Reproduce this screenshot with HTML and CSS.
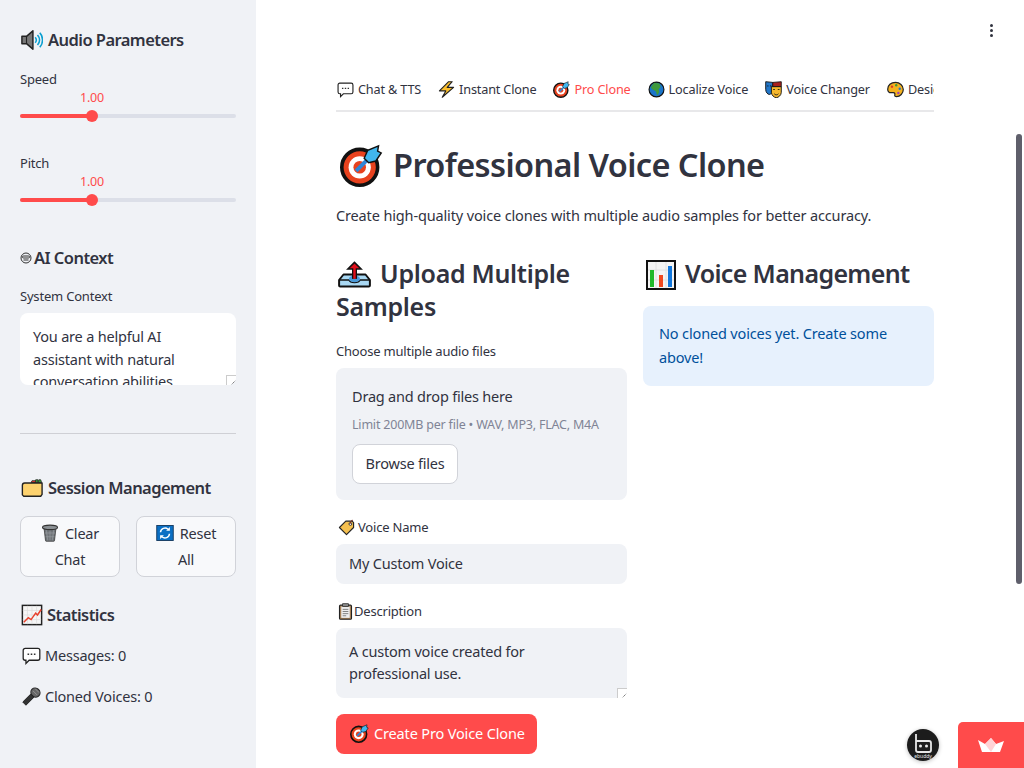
FILE: index.html
```html
<!DOCTYPE html>
<html lang="en">
<head>
    <meta charset="UTF-8">
    <meta name="viewport" content="width=device-width, initial-scale=1.0">
    <title>Professional Voice Clone</title>
    <link rel="stylesheet" href="styles.css">
</head>
<body>
    <svg class="defs" width="0" height="0">
        <symbol id="i-speaker" viewBox="0 0 24 24">
            <path d="M1 8h5l7-6v20l-7-6H1z" fill="#777" stroke="#222" stroke-width="1.600" stroke-linejoin="round"/>
            <path d="M6 8v8" stroke="#222" stroke-width="1.200"/>
            <path d="M15.500 9c1.500 1.800 1.500 4.200 0 6M18 6.500c3 3.200 3 7.800 0 11M20.500 4c4 4.500 4 11.500 0 16" fill="none" stroke="#0a9fd0" stroke-width="1.700"/>
        </symbol>
        <symbol id="i-robot" viewBox="0 0 24 24">
            <circle cx="12" cy="12" r="10" fill="none" stroke="#333" stroke-width="2"/>
            <rect x="5" y="8" width="14" height="4" rx="2" fill="none" stroke="#333" stroke-width="2"/>
            <path d="M7 16h10" stroke="#333" stroke-width="2"/>
        </symbol>
        <symbol id="i-folder" viewBox="0 0 24 24">
            <path d="M15 6l1-3h2.500v3zM18.500 6l1-3h2l1 3z" fill="#3a9a3a" stroke="#222" stroke-width=".8"/>
            <path d="M11 6l1-2h4v2z" fill="#d9372b" stroke="#222" stroke-width=".8"/>
            <path d="M1.500 9c0-1.500 1-2.500 2.500-2.500h19V19l-1.500 2H3l-1.500-1.500z" fill="#fdd26e" stroke="#222" stroke-width="1.500" stroke-linejoin="round"/>
        </symbol>
        <symbol id="i-trash" viewBox="0 0 24 24">
            <path d="M4 5h16l-2 17a1 1 0 0 1-1 1H7a1 1 0 0 1-1-1z" fill="#6f7478" stroke="#333" stroke-width="1"/>
            <path d="M7 8l2 14M12 8v14M17 8l-2 14M5 12h14M6 17h12" stroke="#9aa0a4" stroke-width=".8"/>
            <ellipse cx="12" cy="4.500" rx="10" ry="3" fill="#8b9094" stroke="#333" stroke-width="1.400"/>
        </symbol>
        <symbol id="i-refresh" viewBox="0 0 24 24">
            <rect x="1" y="2" width="22" height="20" fill="#0a6fc4" stroke="#12375c" stroke-width="1.200"/>
            <path d="M6 11a6 6 0 0 1 10-4M18 13a6 6 0 0 1-10 4" fill="none" stroke="#fff" stroke-width="2"/>
            <path d="M18.500 4v5h-5zM5.500 20v-5h5z" fill="#fff"/>
        </symbol>
        <symbol id="i-trend" viewBox="0 0 24 24">
            <rect x="1.500" y="1.500" width="21" height="21" fill="#f6f6f6" stroke="#222" stroke-width="1.600"/>
            <path d="M7 2v20M12 2v20M17 2v20M2 7h20M2 12h20M2 17h20" stroke="#ddd" stroke-width=".8"/>
            <path d="M3 20l5-5 3 2 5-7 2 2 4-6" fill="none" stroke="#e8412c" stroke-width="1.600"/>
        </symbol>
        <symbol id="i-chat" viewBox="0 0 24 24">
            <path d="M4 3h16a2.500 2.500 0 0 1 2.500 2.500v10A2.500 2.500 0 0 1 20 18H9l-4 4v-4H4a2.500 2.500 0 0 1-2.500-2.500v-10A2.500 2.500 0 0 1 4 3z" fill="#fff" stroke="#222" stroke-width="1.600"/>
            <path d="M7 10.500h2M11 10.500h2M15 10.500h2" stroke="#333" stroke-width="1.800"/>
        </symbol>
        <symbol id="i-mic" viewBox="0 0 24 24">
            <path d="M12 8l4 4L5 23l-4-4z" fill="#333" stroke="#222" stroke-width="1.200" stroke-linejoin="round"/>
            <ellipse cx="17" cy="7" rx="6" ry="5.500" transform="rotate(45 17 7)" fill="#666" stroke="#222" stroke-width="1.400"/>
            <path d="M14 5l5 5M17 2.500l4.500 4.500" stroke="#aaa" stroke-width=".8"/>
        </symbol>
        <symbol id="i-bolt" viewBox="0 0 24 24">
            <path d="M15 1L2 14h9L6 23l16-14h-9l7-8z" fill="#fbbf2d" stroke="#222" stroke-width="1.600" stroke-linejoin="round"/>
        </symbol>
        <symbol id="i-target" viewBox="0 0 24 24">
            <circle cx="11" cy="13" r="10" fill="#e8421e" stroke="#111" stroke-width="2"/>
            <circle cx="11" cy="13" r="6.200" fill="#fff"/>
            <circle cx="11" cy="13" r="3.500" fill="#e8421e"/>
            <path d="M9 15l8-8" stroke="#2f86d8" stroke-width="2.200"/>
            <path d="M13.500 8l2-4.500 6-2.500-.5 3 2 1-3 4.500-4 1z" fill="#41b6ee" stroke="#111" stroke-width=".8"/>
        </symbol>
        <symbol id="i-globe" viewBox="0 0 24 24">
            <circle cx="12" cy="12" r="10.500" fill="#1a75c9" stroke="#111" stroke-width="1.600"/>
            <path d="M9 2.500l7 1 2 5-3 3 1 4-3 5-2-6-4-2-3-3 2-4z" fill="#3f9a3d"/>
        </symbol>
        <symbol id="i-masks" viewBox="0 0 24 24">
            <path d="M1 1l10 1v10c0 4-3 7-5 7s-5-3-5-7z" fill="#2277c9" stroke="#111" stroke-width="1.300"/>
            <path d="M11 2l12-1v7H11z" fill="#a9201d" stroke="#111" stroke-width="1.200"/>
            <path d="M9 8h14v8c0 4-4 7.500-7 7.500S9 20 9 16z" fill="#f6b82d" stroke="#111" stroke-width="1.300"/>
            <path d="M11.500 12h2.500M18 12h2.500M13 18c1.500 2 4.500 2 6 0" fill="none" stroke="#111" stroke-width="1.200"/>
            <path d="M3 7h2M7 7h2" stroke="#111" stroke-width="1.200"/>
        </symbol>
        <symbol id="i-palette" viewBox="0 0 24 24">
            <path d="M12 2C5.500 2 1 6 1 11.500c0 3 2 5 5 5h3c2 0 2.500 1.500 2 3-.5 2 1 2.500 2.500 2.500 5 0 9.500-4.500 9.500-10S18 2 12 2z" fill="#f4b21f" stroke="#222" stroke-width="1.700"/>
            <circle cx="7" cy="8" r="1.700" fill="#d83b2e"/>
            <circle cx="13" cy="6" r="1.700" fill="#3a9a3a"/>
            <circle cx="18" cy="11" r="1.700" fill="#2277c9"/>
            <circle cx="16" cy="17" r="1.700" fill="#a33fb0"/>
        </symbol>
        <symbol id="i-upload" viewBox="0 0 30 24">
            <path d="M5 12h20l4 5v5a1 1 0 0 1-1 1H2a1 1 0 0 1-1-1v-5z" fill="#a9d8f3" stroke="#111" stroke-width="1.800" stroke-linejoin="round"/>
            <path d="M1.500 17H10c1 3 9 3 10 0h8.500" fill="none" stroke="#111" stroke-width="1.200"/>
            <ellipse cx="15" cy="16" rx="5" ry="3" fill="#4a9ad8"/>
            <path d="M15 16V6" stroke="#111" stroke-width="4.500"/>
            <path d="M15 1l-6 6h12z" fill="#e10f1a" stroke="#111" stroke-width="1.400"/>
            <path d="M15 16V6" stroke="#e10f1a" stroke-width="2.200"/>
        </symbol>
        <symbol id="i-bars" viewBox="0 0 30 30">
            <rect x="1" y="1" width="28" height="28" fill="#f4f4f4" stroke="#111" stroke-width="2"/>
            <path d="M10 2v26M20 2v26M2 10h26M2 20h26" stroke="#ddd" stroke-width=".8"/>
            <rect x="4" y="10" width="4" height="17" fill="#20b82a"/>
            <rect x="13" y="15" width="4" height="12" fill="#f0491f"/>
            <rect x="22" y="6" width="4" height="21" fill="#1277dc"/>
        </symbol>
        <symbol id="i-tag" viewBox="0 0 24 24">
            <path d="M11 3h9l2 2v7L12 22 2 12z" fill="#f5c04f" stroke="#222" stroke-width="1.600" stroke-linejoin="round"/>
            <circle cx="17.500" cy="7" r="2" fill="#fff" stroke="#222" stroke-width="1.200"/>
            <path d="M17 7c1-4 2-6 4-5" fill="none" stroke="#7a2c1d" stroke-width="1.400"/>
        </symbol>
        <symbol id="i-clipboard" viewBox="0 0 24 24">
            <rect x="3.500" y="3" width="17" height="20" rx="1.500" fill="#a57f55" stroke="#222" stroke-width="1.500"/>
            <rect x="6" y="5" width="12" height="16" fill="#eee"/>
            <rect x="8" y="1" width="8" height="4" fill="#888" stroke="#222"/>
            <path d="M8 9h8M8 12h8M8 15h8M8 18h5" stroke="#666" stroke-width="1.100"/>
        </symbol>
    </svg>

    <div class="app">
        <aside class="sidebar">
            <h3 class="side-head first"><svg class="ico ico-head"><use href="#i-speaker"/></svg>Audio Parameters</h3>

            <div class="slider">
                <div class="field-label">Speed</div>
                <div class="slider-value">1.00</div>
                <div class="track"><div class="track-fill"></div><div class="thumb"></div></div>
            </div>
            <div class="slider">
                <div class="field-label">Pitch</div>
                <div class="slider-value">1.00</div>
                <div class="track"><div class="track-fill"></div><div class="thumb"></div></div>
            </div>

            <h3 class="side-head context"><svg class="ico ico-small"><use href="#i-robot"/></svg>AI Context</h3>
            <div class="field-label">System Context</div>
            <div class="textarea textarea-white">
                You are a helpful AI assistant with natural conversation abilities
                <span class="grip"></span>
            </div>

            <hr class="divider">

            <h3 class="side-head session"><svg class="ico ico-head"><use href="#i-folder"/></svg>Session Management</h3>
            <div class="side-buttons">
                <button class="btn side-btn"><svg class="ico ico-btn"><use href="#i-trash"/></svg>Clear Chat</button>
                <button class="btn side-btn"><svg class="ico ico-btn"><use href="#i-refresh"/></svg>Reset All</button>
            </div>

            <h3 class="side-head stats"><svg class="ico ico-head"><use href="#i-trend"/></svg>Statistics</h3>
            <p class="stat"><svg class="ico ico-stat"><use href="#i-chat"/></svg>Messages: 0</p>
            <p class="stat"><svg class="ico ico-stat"><use href="#i-mic"/></svg>Cloned Voices: 0</p>
        </aside>

        <main class="main">
            <nav class="tabs">
                <div class="tab"><svg class="ico ico-tab"><use href="#i-chat"/></svg>Chat &amp; TTS</div>
                <div class="tab"><svg class="ico ico-tab"><use href="#i-bolt"/></svg>Instant Clone</div>
                <div class="tab active"><svg class="ico ico-tab"><use href="#i-target"/></svg>Pro Clone</div>
                <div class="tab"><svg class="ico ico-tab"><use href="#i-globe"/></svg>Localize Voice</div>
                <div class="tab"><svg class="ico ico-tab"><use href="#i-masks"/></svg>Voice Changer</div>
                <div class="tab"><svg class="ico ico-tab"><use href="#i-palette"/></svg>Design</div>
            </nav>

            <h1 class="title"><svg class="ico ico-title"><use href="#i-target"/></svg>Professional Voice Clone</h1>
            <p class="lead">Create high-quality voice clones with multiple audio samples for better accuracy.</p>

            <div class="columns">
                <section class="col-left">
                    <h2 class="sub"><svg class="ico ico-upload"><use href="#i-upload"/></svg>Upload Multiple Samples</h2>
                    <div class="field-label">Choose multiple audio files</div>
                    <div class="uploader">
                        <div class="drop-text">Drag and drop files here</div>
                        <div class="drop-hint">Limit 200MB per file • WAV, MP3, FLAC, M4A</div>
                        <button class="btn browse">Browse files</button>
                    </div>

                    <div class="field-label name-label"><svg class="ico ico-label"><use href="#i-tag"/></svg>Voice Name</div>
                    <div class="input">My Custom Voice</div>

                    <div class="field-label desc-label"><svg class="ico ico-label"><use href="#i-clipboard"/></svg>Description</div>
                    <div class="textarea textarea-grey">
                        A custom voice created for professional use.
                        <span class="grip"></span>
                    </div>

                    <button class="btn primary"><svg class="ico ico-primary"><use href="#i-target"/></svg>Create Pro Voice Clone</button>
                </section>

                <section class="col-right">
                    <h2 class="sub"><svg class="ico ico-bars"><use href="#i-bars"/></svg>Voice Management</h2>
                    <div class="info">No cloned voices yet. Create some above!</div>
                </section>
            </div>
        </main>
    </div>

    <div class="menu-dots"><span></span><span></span><span></span></div>
    <div class="scrollbar"></div>

    <div class="ebuddy">
        <svg viewBox="0 0 32 32" width="32" height="32">
            <circle cx="16" cy="16" r="16" fill="#1c1c1c"/>
            <path d="M9 5v16a2 2 0 0 0 2 2h11a2 2 0 0 0 2-2v-7a2 2 0 0 0-2-2H9" fill="none" stroke="#e8e8e8" stroke-width="1.800"/>
            <circle cx="13.500" cy="17" r="1.500" fill="#e8e8e8"/>
            <circle cx="19.500" cy="17" r="1.500" fill="#e8e8e8"/>
            <text x="16" y="28.500" class="ebuddy-text">ebuddy</text>
        </svg>
    </div>
    <div class="badge">
        <svg viewBox="0 0 26 14" width="26" height="14">
            <path d="M0 2l7 4 6-6 5 6 8-3-4 11H4z" fill="#fff"/>
            <path d="M7 6l6-6 5 6-5 8z" fill="#ffd3d6"/>
        </svg>
    </div>
</body>
</html>
```

FILE: styles.css
```css
* {
    box-sizing: border-box;
}
html, body {
    margin: 0;
    height: 768px;
    overflow: hidden;
}
body {
    font-family: "Noto Sans", sans-serif;
    font-size: 14.5px;
    letter-spacing: -0.2px;
    color: #31333f;
    background-color: white;
}
.defs {
    position: absolute;
}
.app {
    display: flex;
    height: 768px;
}
.ico {
    display: inline-block;
    vertical-align: middle;
    flex: none;
}

/* sidebar */
.sidebar {
    width: 256px;
    flex: none;
    padding: 0 20px;
    background-color: #f0f2f6;
}
.side-head {
    display: flex;
    align-items: center;
    margin: 0;
    font-size: 16.5px;
    font-weight: 600;
    letter-spacing: -0.55px;
    line-height: 24px;
}
.side-head.first {
    margin-top: 28px;
}
.side-head.context {
    margin-top: 9px;
}
.side-head.session {
    margin-top: 42px;
}
.side-head.stats {
    margin-top: 26px;
}
.ico-head {
    width: 22px;
    height: 22px;
    margin-right: 5px;
    margin-left: 1px;
}
.side-head.stats .ico-head {
    margin-right: 4px;
}
.ico-small {
    width: 12px;
    height: 12px;
    margin-right: 2px;
}
.field-label {
    font-size: 13px;
    line-height: 20px;
}
.slider {
    height: 84px;
}
.slider:first-of-type {
    margin-top: 17px;
}
.slider .field-label {
    height: 20px;
}
.slider-value {
    width: 144px;
    height: 18px;
    font-size: 12.5px;
    line-height: 18px;
    text-align: center;
    color: #ff4b4b;
}
.track {
    position: relative;
    height: 4px;
    margin-top: 7px;
    border-radius: 2px;
    background-color: #dcdfe8;
}
.track-fill {
    width: 72px;
    height: 4px;
    border-radius: 2px;
    background-color: #ff4b4b;
}
.thumb {
    position: absolute;
    left: 66px;
    top: -4px;
    width: 12px;
    height: 12px;
    border-radius: 50%;
    background-color: #ff4b4b;
}
.side-head.context + .field-label {
    margin-top: 16px;
    height: 27px;
}
.textarea {
    position: relative;
    overflow: hidden;
    border-radius: 8px;
    font-size: 14.5px;
}
.textarea-white {
    height: 72px;
    padding: 12px 13px 0;
    line-height: 22.5px;
    background-color: white;
}
.textarea-grey {
    height: 70px;
    padding: 12px 40px 0 13px;
    line-height: 22px;
    background-color: #f0f2f6;
}
.grip {
    position: absolute;
    right: 0;
    bottom: 0;
    width: 10px;
    height: 10px;
    border: 1px solid #ccc;
    border-right: none;
    border-bottom: none;
    background: linear-gradient(135deg, white 68%, #666 68%, #666 76%, white 76%);
}
.divider {
    height: 1px;
    margin: 48px 0 0;
    border: none;
    background-color: #cfd0d5;
}
.side-head.session + .side-buttons {
    margin-top: 16px;
}
.side-buttons {
    display: flex;
    gap: 16px;
}
.btn {
    font-family: inherit;
    letter-spacing: inherit;
    color: #31333f;
    border: 1px solid #d1d3d9;
    border-radius: 8px;
    background-color: white;
}
.side-btn {
    width: 100px;
    height: 61px;
    padding: 2px 12px 4px;
    font-size: 14.5px;
    line-height: 26px;
    background-color: #f8f9fb;
}
.ico-btn {
    width: 18px;
    height: 18px;
    margin: -3px 6px 0 0;
}
.stat {
    display: flex;
    align-items: center;
    margin: 0;
    font-size: 14.5px;
    line-height: 22px;
}
.side-head.stats + .stat {
    margin-top: 17px;
}
.stat + .stat {
    margin-top: 19px;
}
.ico-stat {
    width: 19px;
    height: 19px;
    margin: 0 4px 0 2px;
}

/* main column */
.main {
    flex: 1;
    min-width: 0;
    padding: 72px 90px 0 80px;
}
.tabs {
    display: flex;
    gap: 16px;
    height: 40px;
    overflow: hidden;
    border-bottom: 2px solid #e8e8ea;
    font-size: 12.7px;
    letter-spacing: -0.17px;
}
.tab {
    display: flex;
    align-items: center;
    height: 40px;
    padding: 0 0 6px;
    white-space: nowrap;
}
.tab.active {
    color: #ff4b4b;
    border-bottom: 2px solid #ff4b4b;
    padding-bottom: 4px;
}
.ico-tab {
    width: 17px;
    height: 17px;
    margin: 0 4px 0 1px;
}
.title {
    display: flex;
    align-items: center;
    margin: 29px 0 0;
    font-size: 32.5px;
    font-weight: 600;
    letter-spacing: -0.6px;
    line-height: 48px;
}
.ico-title {
    width: 43px;
    height: 43px;
    margin: 0 10px 0 4px;
}
.lead {
    margin: 15px 0 0;
    letter-spacing: -0.14px;
    line-height: 22px;
}
.columns {
    display: flex;
    gap: 16px;
    margin-top: 31px;
}
.col-left {
    width: 291px;
    flex: none;
}
.col-right {
    flex: 1;
    min-width: 0;
}
.sub {
    margin: 0;
    font-size: 25px;
    font-weight: 600;
    letter-spacing: -0.3px;
    line-height: 33px;
}
.col-left .sub + .field-label {
    margin-top: 18px;
}
.col-right .sub {
    padding-left: 3px;
    letter-spacing: -0.65px;
}
.ico-upload {
    width: 33px;
    height: 27px;
    margin: -4px 9px 0 2px;
}
.ico-bars {
    width: 30px;
    height: 30px;
    margin: -3px 9px 0 0;
}
.uploader {
    height: 132px;
    margin-top: 7px;
    padding: 15px 16px;
    border-radius: 8px;
    background-color: #f0f2f6;
}
.drop-text {
    font-size: 14.5px;
    line-height: 26px;
}
.drop-hint {
    margin-top: 7px;
    font-size: 12.5px;
    line-height: 18px;
    color: #808495;
}
.browse {
    display: block;
    width: 106px;
    height: 40px;
    margin-top: 10px;
    padding: 0 0 2px;
    font-size: 14.5px;
}
.name-label {
    display: flex;
    align-items: center;
    margin-top: 17px;
}
.desc-label {
    display: flex;
    align-items: center;
    margin-top: 17px;
}
.ico-label {
    width: 17px;
    height: 17px;
    margin: 0 3px 0 2px;
}
.desc-label .ico-label {
    margin: 0 0 0 1px;
}
.input {
    height: 40px;
    margin-top: 7px;
    padding: 0 13px;
    border-radius: 8px;
    font-size: 14.5px;
    line-height: 38px;
    background-color: #f0f2f6;
}
.textarea-grey {
    margin-top: 7px;
}
.primary {
    display: flex;
    align-items: center;
    width: 201px;
    height: 40px;
    margin-top: 16px;
    padding: 0 0 2px 14px;
    font-size: 14.5px;
    letter-spacing: -0.15px;
    color: white;
    border: none;
    background-color: #ff4b4b;
}
.ico-primary {
    width: 19px;
    height: 19px;
    margin-right: 5px;
}
.info {
    height: 80px;
    margin-top: 16px;
    padding: 15px 16px;
    border-radius: 8px;
    letter-spacing: -0.15px;
    line-height: 24px;
    color: #00509b;
    background-color: #e7f1fd;
}

/* things that float over the page */
.menu-dots {
    position: absolute;
    top: 24px;
    left: 990px;
    display: flex;
    flex-direction: column;
    gap: 2px;
}
.menu-dots span {
    width: 3px;
    height: 3px;
    border-radius: 50%;
    background-color: #31333f;
}
.scrollbar {
    position: absolute;
    top: 134px;
    left: 1016px;
    width: 6px;
    height: 450px;
    border-radius: 3px;
    background-color: #5f5f6b;
}
.ebuddy {
    position: absolute;
    left: 907px;
    top: 729px;
    width: 32px;
    height: 32px;
    border-radius: 50%;
    box-shadow: 0 1px 4px rgba(0,0,0,0.25);
}
.ebuddy-text {
    font-size: 5px;
    letter-spacing: 0;
    text-anchor: middle;
    fill: #e8e8e8;
}
.badge {
    position: absolute;
    left: 958px;
    top: 722px;
    display: flex;
    justify-content: center;
    padding-top: 16px;
    width: 66px;
    height: 46px;
    border-radius: 5px 0 0 0;
    background-color: #ff4b4b;
}
```
